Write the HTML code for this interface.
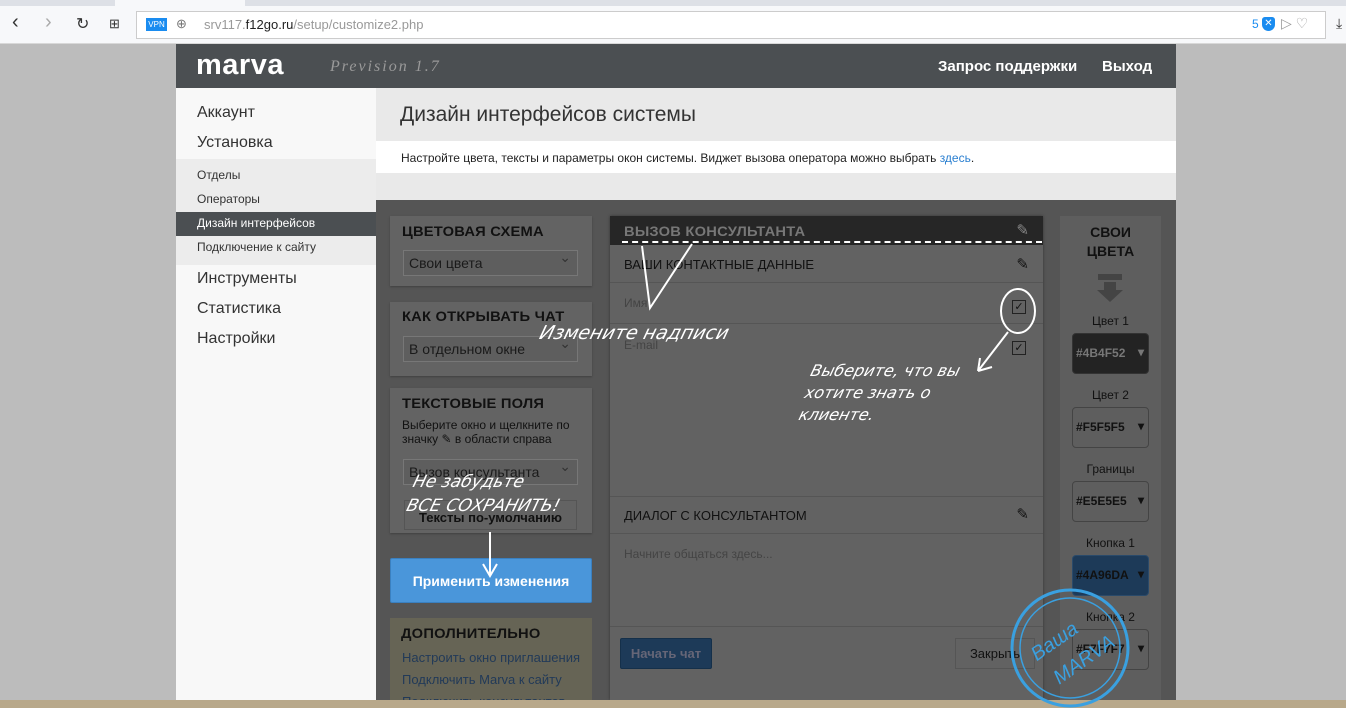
<!DOCTYPE html>
<html><head><meta charset="utf-8"><style>
*{box-sizing:border-box;margin:0;padding:0}
html,body{width:1346px;height:708px;overflow:hidden}
body{background:#bcbcbc;font-family:"Liberation Sans",sans-serif;position:relative}
.abs{position:absolute}
.tabs{left:0;top:0;width:1346px;height:6px;background:#dde0e6}
.tb{left:0;top:6px;width:1346px;height:38px;background:#f7f8fa;border-bottom:1px solid #d8d8d8}
.addr{left:136px;top:11px;width:1190px;height:28px;background:#fff;border:1px solid #ccc}
.hdr{left:176px;top:44px;width:1000px;height:44px;background:#4b4f52}
.side{left:176px;top:88px;width:200px;height:612px;background:#f8f8f8}
.content{left:376px;top:88px;width:800px;height:612px;background:#e9e9e9}
.ov{left:376px;top:200px;width:800px;height:500px;background:#555}
.pn{background:#636363;box-shadow:0 1px 2px rgba(0,0,0,.25)}
.h{font-weight:bold;font-size:14px;color:#111;letter-spacing:.2px;font-family:"Liberation Sans Narrow","Liberation Sans",sans-serif;transform:scaleX(1.05);transform-origin:left}
.sel{background:#5e5e5e;border:1px solid #777;height:26px;font-size:14px;color:#1a1a1a;padding:4px 5px;position:absolute}
.sel:after{content:"⌄";position:absolute;right:6px;top:-2px;color:#333;font-size:14px}
.hw{font-family:"DejaVu Sans",sans-serif;font-style:italic;color:#fff;font-size:17px;transform:skewX(-15deg)}
.row{border-bottom:1px solid #555;position:absolute;left:0;width:433px}
.cb{width:14px;height:14px;border:1px solid #222;position:absolute;font-size:11px;line-height:12px;text-align:center;color:#111}
.cl{font-size:12px;color:#111;text-align:center;width:101px;position:absolute;left:0}
.cp{position:absolute;left:12px;width:77px;height:41px;border:1px solid #444;border-radius:4px;font-size:12px;font-weight:bold;color:#111;padding:12px 0 0 3px;background:#5e5e5e}
.cp:after{content:"▾";position:absolute;right:4px;top:11px;font-size:12px}
</style></head><body>
<div class="abs tabs"></div>
<div class="abs" style="left:115px;top:0;width:130px;height:6px;background:#f7f8fa"></div>
<div class="abs tb"></div>
<div class="abs" style="left:12px;top:11px;font-size:20px;color:#333">‹</div>
<div class="abs" style="left:45px;top:11px;font-size:20px;color:#aaa">›</div>
<div class="abs" style="left:76px;top:14px;font-size:16px;color:#333">↻</div>
<div class="abs" style="left:109px;top:16px;font-size:13px;color:#333">⊞</div>
<div class="abs addr"></div>
<div class="abs" style="left:146px;top:18px;width:21px;height:13px;background:#1a8cf0;color:#fff;font-size:8px;line-height:13px;text-align:center">VPN</div>
<div class="abs" style="left:176px;top:16px;font-size:13px;color:#777">⊕</div>
<div class="abs" style="left:204px;top:17px;font-size:13px;color:#999">srv117.<span style="color:#222">f12go.ru</span>/setup/customize2.php</div>
<div class="abs" style="left:1252px;top:17px;font-size:12px;color:#1a8cf0">5</div>
<div class="abs" style="left:1262px;top:17px;width:13px;height:14px;background:#1a8cf0;border-radius:3px 3px 7px 7px;color:#fff;font-size:10px;text-align:center;line-height:14px">✕</div>
<div class="abs" style="left:1281px;top:15px;font-size:14px;color:#999">▷ ♡</div>
<div class="abs" style="left:1336px;top:15px;font-size:14px;color:#333">⤓</div>

<div class="abs hdr"></div>
<div class="abs" style="left:196px;top:49px;font-size:29px;font-weight:bold;color:#fff;letter-spacing:0.5px">marva</div>
<div class="abs" style="left:330px;top:58px;font-size:16px;font-style:italic;color:#999;font-family:'Liberation Serif',serif;letter-spacing:2px">Prevision 1.7</div>
<div class="abs" style="left:938px;top:58px;font-size:15px;font-weight:bold;color:#fff">Запрос поддержки</div>
<div class="abs" style="left:1102px;top:58px;font-size:15px;font-weight:bold;color:#fff">Выход</div>

<div class="abs side"></div>
<div class="abs" style="left:176px;top:159px;width:200px;height:106px;background:#ececec"></div>
<div class="abs" style="left:176px;top:212px;width:200px;height:24px;background:#4b4f52"></div>
<div class="abs" style="left:197px;top:98px;font-size:16px;color:#333;line-height:30px">Аккаунт<br>Установка</div>
<div class="abs" style="left:197px;top:163px;font-size:12px;color:#333;line-height:24px">Отделы<br>Операторы<br><span style="color:#fff">Дизайн интерфейсов</span><br>Подключение к сайту</div>
<div class="abs" style="left:197px;top:264px;font-size:16px;color:#333;line-height:30px">Инструменты<br>Статистика<br>Настройки</div>

<div class="abs content"></div>
<div class="abs" style="left:400px;top:103px;font-size:21px;color:#333">Дизайн интерфейсов системы</div>
<div class="abs" style="left:376px;top:141px;width:800px;height:32px;background:#fff"></div>
<div class="abs" style="left:401px;top:151px;font-size:12px;color:#222">Настройте цвета, тексты и параметры окон системы. Виджет вызова оператора можно выбрать <span style="color:#2a7fd0">здесь</span>.</div>
<div class="abs ov"></div>

<div class="abs pn" style="left:390px;top:216px;width:202px;height:70px"></div>
<div class="abs h" style="left:402px;top:223px">ЦВЕТОВАЯ СХЕМА</div>
<div class="sel" style="left:403px;top:250px;width:175px">Свои цвета</div>
<div class="abs pn" style="left:390px;top:302px;width:202px;height:74px"></div>
<div class="abs h" style="left:402px;top:308px">КАК ОТКРЫВАТЬ ЧАТ</div>
<div class="sel" style="left:403px;top:336px;width:175px">В отдельном окне</div>
<div class="abs pn" style="left:390px;top:388px;width:202px;height:145px"></div>
<div class="abs h" style="left:402px;top:395px">ТЕКСТОВЫЕ ПОЛЯ</div>
<div class="abs" style="left:402px;top:418px;font-size:12px;color:#111;line-height:14px">Выберите окно и щелкните по<br>значку ✎ в области справа</div>
<div class="sel" style="left:403px;top:459px;width:175px">Вызов консультанта</div>
<div class="abs" style="left:404px;top:500px;width:173px;height:30px;border:1px solid #555;font-size:13px;font-weight:bold;color:#111;text-align:center;line-height:34px">Тексты по-умолчанию</div>
<div class="abs" style="left:390px;top:558px;width:202px;height:45px;background:#4a96da;border:1px solid #3a80c0;border-radius:2px;color:#fff;font-weight:bold;font-size:14px;text-align:center;line-height:44px">Применить изменения</div>
<div class="abs" style="left:390px;top:618px;width:202px;height:82px;background:#666455;overflow:hidden">
<div class="h" style="position:absolute;left:11px;top:7px">ДОПОЛНИТЕЛЬНО</div>
<div style="position:absolute;left:12px;top:29px;font-size:13px;color:#223a58;line-height:22px">Настроить окно приглашения<br>Подключить Marva к сайту<br>Подключить консультантов</div>
</div>

<div class="abs" style="left:610px;top:216px;width:433px;height:484px;background:#626262;box-shadow:0 0 3px rgba(0,0,0,.4)">
 <div style="position:absolute;left:0;top:0;width:433px;height:29px;background:#262626"></div>
 <div class="h" style="position:absolute;left:14px;top:7px;color:#777">ВЫЗОВ КОНСУЛЬТАНТА</div>
 <div style="position:absolute;right:14px;top:5px;font-size:15px;color:#888">✎</div>
 <div class="row" style="top:29px;height:38px"></div>
 <div style="position:absolute;left:14px;top:41px;font-size:13px;color:#111">ВАШИ КОНТАКТНЫЕ ДАННЫЕ</div>
 <div style="position:absolute;right:14px;top:39px;font-size:15px;color:#111">✎</div>
 <div class="row" style="top:67px;height:41px"></div>
 <div style="position:absolute;left:14px;top:80px;font-size:12px;color:#444">Имя</div>
 <div class="cb" style="left:402px;top:84px">✓</div>
 <div style="position:absolute;left:14px;top:122px;font-size:12px;color:#444">E-mail</div>
 <div class="cb" style="left:402px;top:125px">✓</div>
 <div class="row" style="top:280px;height:1px"></div>
 <div class="row" style="top:281px;height:37px"></div>
 <div style="position:absolute;left:14px;top:292px;font-size:13px;color:#111">ДИАЛОГ С КОНСУЛЬТАНТОМ</div>
 <div style="position:absolute;right:14px;top:289px;font-size:15px;color:#111">✎</div>
 <div style="position:absolute;left:14px;top:331px;font-size:12px;color:#444">Начните общаться здесь...</div>
 <div class="row" style="top:410px;height:1px"></div>
 <div style="position:absolute;left:10px;top:422px;width:92px;height:31px;background:#1d3a58;border:1px solid #15304a;border-radius:2px;color:#667;font-size:13px;font-weight:bold;text-align:center;line-height:29px">Начать чат</div>
 <div style="position:absolute;left:345px;top:422px;width:80px;height:31px;border:1px solid #555;color:#111;font-size:13px;text-align:center;line-height:29px">Закрыть</div>
</div>

<div class="abs" style="left:1060px;top:216px;width:101px;height:484px;background:#5e5e5e">
 <div style="position:absolute;width:101px;top:7px;text-align:center;font-weight:bold;font-size:14px;line-height:19px;color:#111">СВОИ<br>ЦВЕТА</div>
 <div style="position:absolute;left:38px;top:58px;width:24px;height:6px;background:#444"></div>
 <div style="position:absolute;left:44px;top:66px;width:12px;height:8px;background:#444"></div>
 <div style="position:absolute;left:37px;top:74px;border-left:13px solid transparent;border-right:13px solid transparent;border-top:12px solid #444"></div>
 <div class="cl" style="top:98px">Цвет 1</div>
 <div class="cp" style="top:117px;background:#232323;color:#777;border-color:#333">#4B4F52</div>
 <div class="cl" style="top:172px">Цвет 2</div>
 <div class="cp" style="top:191px">#F5F5F5</div>
 <div class="cl" style="top:246px">Границы</div>
 <div class="cp" style="top:265px">#E5E5E5</div>
 <div class="cl" style="top:320px">Кнопка 1</div>
 <div class="cp" style="top:339px;background:#1d3a58;border-color:#2a4a6a">#4A96DA</div>
 <div class="cl" style="top:394px">Кнопка 2</div>
 <div class="cp" style="top:413px">#F7F7F7</div>
</div>

<div class="abs" style="left:0;top:700px;width:1346px;height:8px;background:#b8a88a"></div>

<div class="abs" style="left:622px;top:241px;width:420px;height:0;border-top:2px dashed #fff"></div>
<svg class="abs" style="left:600px;top:240px" width="460" height="200">
 <path d="M42 6 L50 68 L92 4" stroke="#fff" stroke-width="2" fill="none"/>
 <ellipse cx="418" cy="71" rx="17" ry="22" stroke="#fff" stroke-width="2" fill="none"/>
 <path d="M408 92 L378 131 M378 131 L380 118 M378 131 L392 127" stroke="#fff" stroke-width="2" fill="none"/>
</svg>
<div class="abs hw" style="left:540px;top:322px;font-size:19px">Измените надписи</div>
<div class="abs hw" style="left:805px;top:360px;line-height:22px;font-size:16px">Выберите, что вы<br>хотите знать о<br>клиенте.</div>
<div class="abs hw" style="left:410px;top:470px;line-height:24px;font-size:17px">Не забудьте<br>ВСЕ СОХРАНИТЬ!</div>
<svg class="abs" style="left:480px;top:530px" width="20" height="50"><path d="M10 2 V44 M3 34 L10 46 L17 34" stroke="#fff" stroke-width="2" fill="none"/></svg>
<svg class="abs" style="left:1005px;top:580px" width="130" height="128"><circle cx="65" cy="68" r="58" stroke="#3aa0e0" stroke-width="3" fill="none"/><circle cx="65" cy="68" r="50" stroke="#3aa0e0" stroke-width="1.5" fill="none"/><text x="30" y="60" fill="#3aa0e0" font-size="20" font-style="italic" font-family="Liberation Sans" transform="rotate(-35 65 68)">Ваша</text><text x="35" y="92" fill="#3aa0e0" font-size="20" font-style="italic" font-family="Liberation Sans" transform="rotate(-35 65 68)">MARVA</text></svg>
</body></html>
